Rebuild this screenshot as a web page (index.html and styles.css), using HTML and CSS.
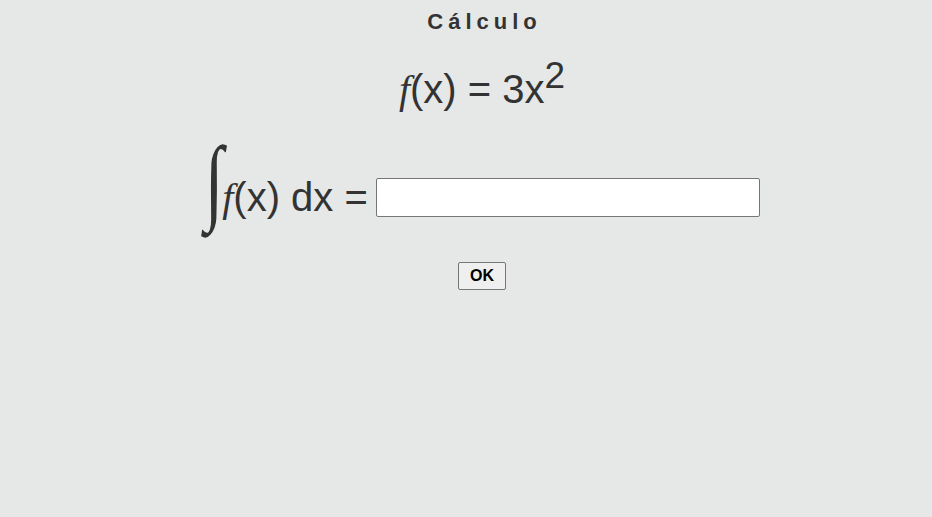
FILE: index.html
```html
<!DOCTYPE html>
<html lang="pt">
<head>
    <meta charset="UTF-8">
    <meta name="viewport" content="width=device-width, initial-scale=1.0">
    <title>Cálculo</title>
    <link rel="stylesheet" href="styles.css">
</head>
<body>

    <div class="container">
        <h2 class="title">Cálculo</h2>

        <p class="func"><span class="fi">f</span>(x) = 3x<sup>2</sup></p>

        <div class="row">
            <span class="integral">∫</span>
            <span class="expr"><span class="fi">f</span>(x) dx =</span>
            <input type="text" id="answer" class="answer">
        </div>

        <button id="ok" class="ok">OK</button>
    </div>

</body>
</html>
```

FILE: styles.css
```css
body {
    font-family: Arial, "Liberation Sans", sans-serif;
    background-color: #e5e8e7;
    color: #333;
    margin: 0;
    padding: 0 0 0 32px;
}
.container {
    display: flex;
    flex-direction: column;
    align-items: center;
}
.title {
    font-size: 22px;
    font-weight: bold;
    letter-spacing: 5px;
    margin: 9px 0 0 0;
    padding-left: 5px;
}
.func {
    font-size: 40px;
    margin: 32px 0 0 0;
    line-height: 44px;
}
.func sup {
    font-size: 37px;
    vertical-align: 15px;
    line-height: 0;
}
.fi {
    font-family: "Liberation Serif", "Times New Roman", serif;
    font-style: italic;
}
.row {
    display: flex;
    align-items: center;
    margin: 35px 8px 0 0;
}
.integral {
    font-family: "Liberation Serif", "Times New Roman", serif;
    font-size: 95px;
    line-height: 100px;
    width: 26px;
    transform: translate(5px, -17px) scaleX(0.72);
}
.expr {
    font-size: 40px;
    margin-right: 8px;
}
.answer {
    width: 384px;
    height: 39px;
    box-sizing: border-box;
    border: 1px solid #767676;
    border-radius: 2px;
    background: white;
}
.ok {
    margin-top: 15px;
    width: 48px;
    height: 28px;
    font-family: Arial, "Liberation Sans", sans-serif;
    font-size: 16px;
    font-weight: bold;
    color: #000;
    background-color: #efefef;
    border: 1px solid #767676;
    border-radius: 2px;
    padding: 0;
}
```
